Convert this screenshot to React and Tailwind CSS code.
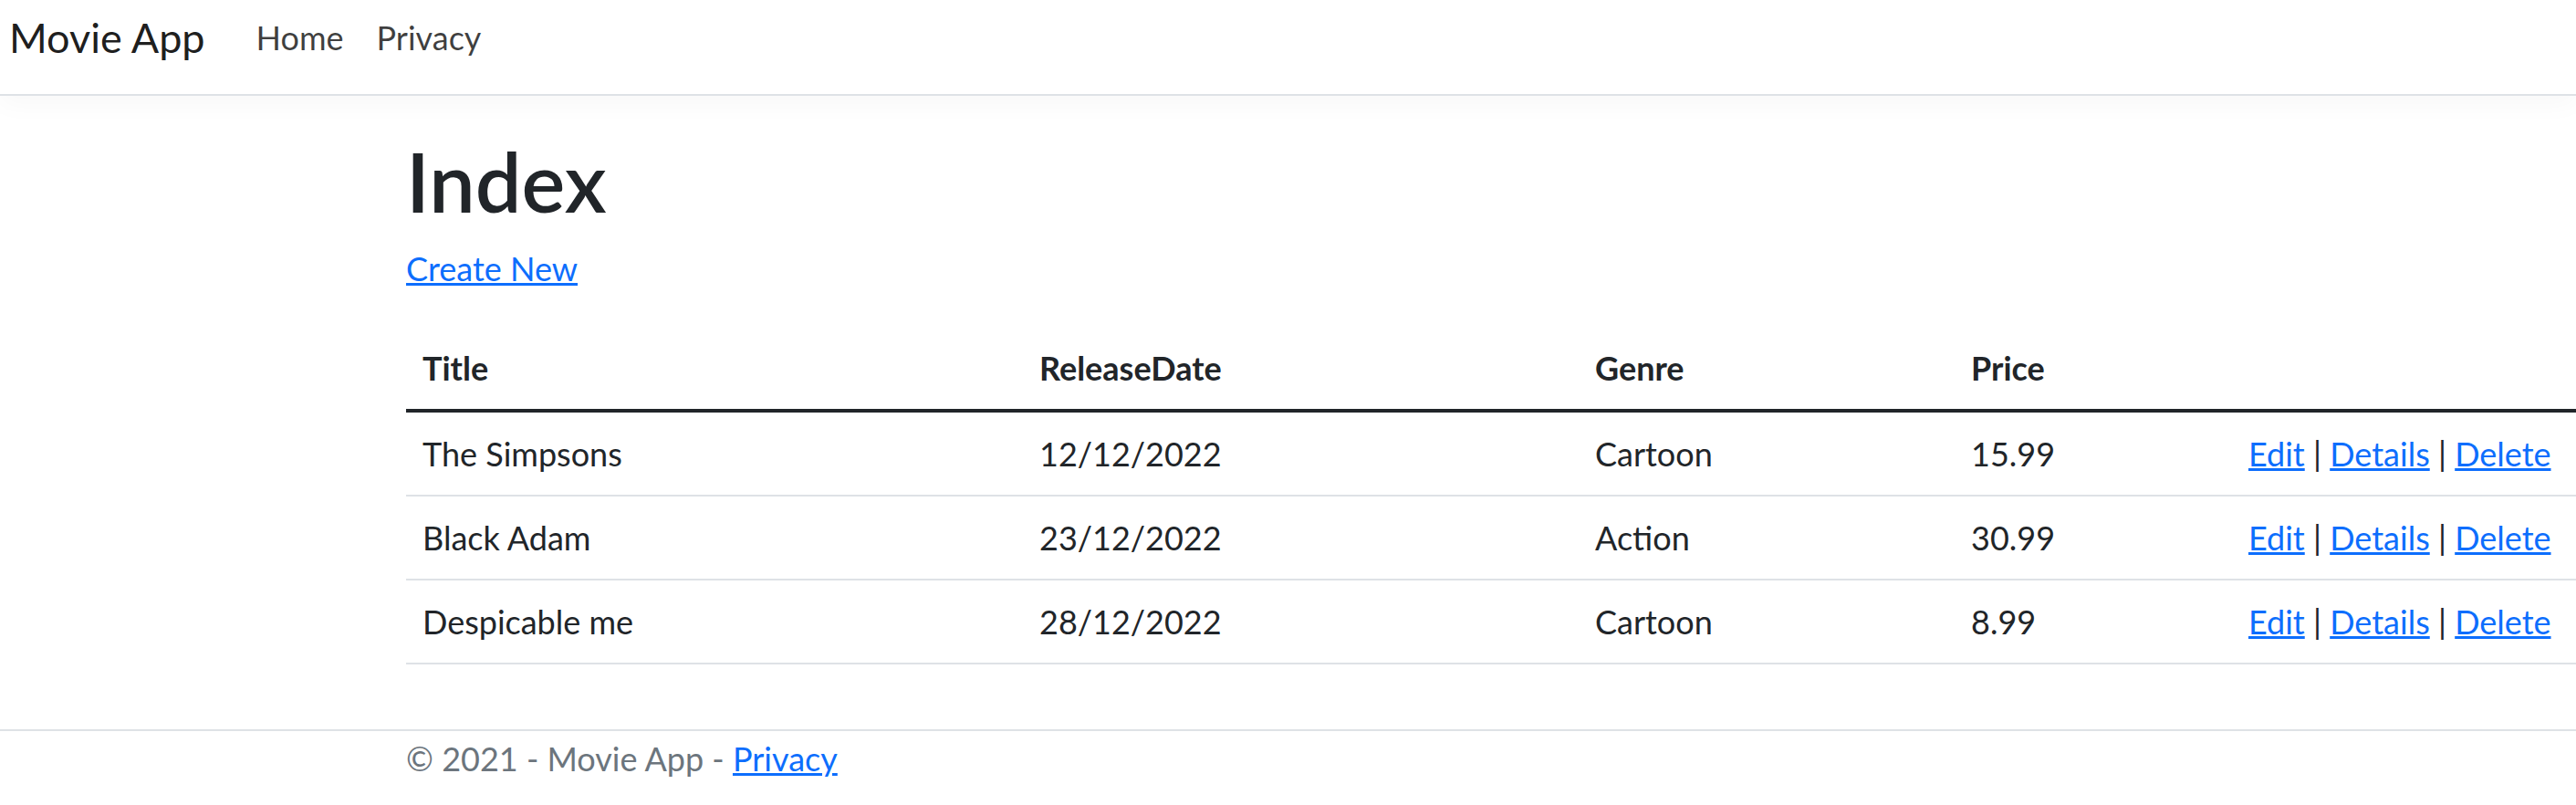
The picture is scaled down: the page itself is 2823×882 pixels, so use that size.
import React from "react"

const movies = [
  { title: "The Simpsons", date: "12/12/2022", genre: "Cartoon", price: "15.99" },
  { title: "Black Adam", date: "23/12/2022", genre: "Action", price: "30.99" },
  { title: "Despicable me", date: "28/12/2022", genre: "Cartoon", price: "8.99" },
]

export default function App() {
  return (
    <div className="min-h-screen bg-white text-[#212529] font-['Lato','Segoe_UI','Liberation_Sans',sans-serif] text-[36px] leading-[54px] overflow-hidden">
      {/* Navbar */}
      <nav className="h-[105px] border-b-2 border-[#dee2e6] bg-white shadow-[0_9px_27px_rgba(0,0,0,0.03)]">
        <div className="h-[82px] flex items-center pl-[10px]">
          <a className="text-[45px] leading-[60px] text-[rgba(0,0,0,0.9)] mr-[38px]">Movie App</a>
          <a className="px-[18px] text-[rgba(0,0,0,0.75)]">Home</a>
          <a className="px-[18px] text-[rgba(0,0,0,0.75)]">Privacy</a>
        </div>
      </nav>

      {/* Main */}
      <main className="pl-[445px] pt-[39px]">
        <h1 className="text-[90px] leading-[108px] font-semibold">Index</h1>
        <p className="mt-[15px] mb-[37px]">
          <a href="#" className="text-[#0d6efd] underline">Create New</a>
        </p>
        <table className="w-full table-fixed border-collapse">
          <colgroup>
            <col className="w-[676px]" />
            <col className="w-[609px]" />
            <col className="w-[412px]" />
            <col className="w-[304px]" />
            <col />
          </colgroup>
          <thead>
            <tr className="border-b-4 border-[#212529]">
              <th className="text-left font-bold px-[18px] py-[18px]">Title</th>
              <th className="text-left font-bold px-[18px] py-[18px]">ReleaseDate</th>
              <th className="text-left font-bold px-[18px] py-[18px]">Genre</th>
              <th className="text-left font-bold px-[18px] py-[18px]">Price</th>
              <th className="px-[18px] py-[18px]"></th>
            </tr>
          </thead>
          <tbody>
            {movies.map((m, i) => (
              <tr key={i} className="border-b-2 border-[#dee2e6]">
                <td className="px-[18px] py-[18px]">{m.title}</td>
                <td className="px-[18px] py-[18px]">{m.date}</td>
                <td className="px-[18px] py-[18px]">{m.genre}</td>
                <td className="px-[18px] py-[18px]">{m.price}</td>
                <td className="px-[18px] py-[18px] whitespace-nowrap">
                  <a href="#" className="text-[#0d6efd] underline">Edit</a> |{" "}
                  <a href="#" className="text-[#0d6efd] underline">Details</a> |{" "}
                  <a href="#" className="text-[#0d6efd] underline">Delete</a>
                </td>
              </tr>
            ))}
          </tbody>
        </table>
      </main>

      {/* Footer */}
      <footer className="mt-[71px] border-t-2 border-[#dee2e6] pt-[3px] text-[#6c757d]">
        <div className="pl-[445px]">
          © 2021 - Movie App - <a href="#" className="text-[#0d6efd] underline">Privacy</a>
        </div>
      </footer>
    </div>
  )
}
